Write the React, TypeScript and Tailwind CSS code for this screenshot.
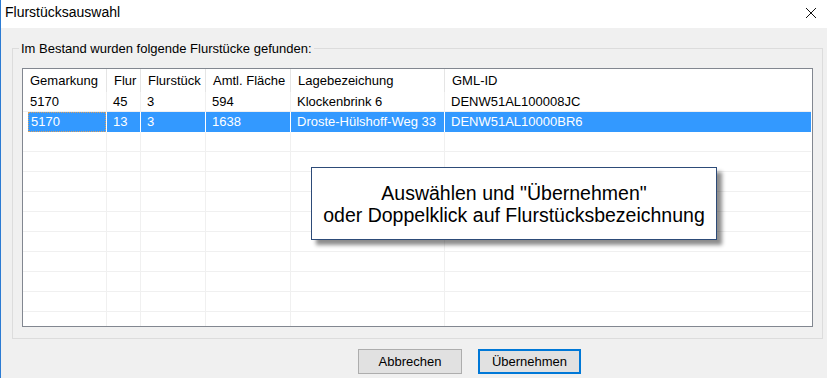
import React from "react";

type Row = string[];

const cols = [84, 34, 65, 85, 154, 366];
const headers = ["Gemarkung", "Flur", "Flurstück", "Amtl. Fläche", "Lagebezeichung", "GML-ID"];

const rows: Row[] = [
  ["5170", "45", "3", "594", "Klockenbrink 6", "DENW51AL100008JC"],
  ["5170", "13", "3", "1638", "Droste-Hülshoff-Weg 33", "DENW51AL10000BR6"],
];

const gridCols = "grid grid-cols-[84px_34px_65px_85px_154px_366px]";

const ui = { fontFamily: '"Liberation Sans", Arial, sans-serif' };

export default function App() {
  const empty = Array.from({ length: 10 });

  return (
    <div
      className="relative w-[827px] h-[378px] flex flex-col bg-white border-l border-[#2b7bd3] text-[13px] text-black overflow-hidden"
      style={ui}
    >
      {/* title bar */}
      <div className="h-[28px] flex items-center justify-between bg-white pl-[4px] pr-[10px]">
        <span className="text-[14px] -mt-[3px]">Flurstücksauswahl</span>
        <svg width="12" height="12" viewBox="0 0 12 12" className="-mt-[2px]">
          <path d="M1 1 L11 11 M11 1 L1 11" stroke="#111" strokeWidth="1" />
        </svg>
      </div>

      {/* client area */}
      <div className="flex-1 bg-[#f0f0f0] flex flex-col">
        <fieldset className="ml-[11px] mr-[4px] mt-[13px] h-[298px] border border-[#dcdcdc] px-[9px]">
          <legend className="-ml-[3px] px-[2px] text-[13px] leading-[15px]">
            Im Bestand wurden folgende Flurstücke gefunden:
          </legend>

          {/* list view */}
          <div className="mt-[12px] h-[259px] w-[791px] border border-[#828790] bg-white overflow-hidden">
            <div className={`${gridCols} h-[23px]`}>
              {headers.map((h, i) => (
                <div
                  key={h}
                  className={`flex items-center pl-[7px] ${i < headers.length - 1 ? "border-r border-[#e5e5e5]" : ""}`}
                >
                  {h}
                </div>
              ))}
            </div>

            {rows.map((r, ri) => {
              const sel = ri === 1;
              return (
                <div key={ri} className={`${gridCols} h-[20px]`}>
                  {r.map((c, i) => (
                    <div
                      key={i}
                      className={`h-[20px] flex ${i < r.length - 1 ? "border-r" : ""} ${
                        sel ? "border-white" : "border-[#f0f0f0] border-b"
                      } ${i === 0 ? "pl-[5px]" : ""}`}
                    >
                      <div
                        className={`flex-1 flex items-center ${i === 0 ? "pl-[2px]" : "pl-[6px]"} ${
                          sel ? "bg-[#3399ff] text-white" : ""
                        } ${sel && i === 0 ? "border border-dotted border-[#d8a060]" : ""}`}
                      >
                        {c}
                      </div>
                    </div>
                  ))}
                </div>
              );
            })}

            {empty.map((_, ri) => (
              <div key={ri} className={`${gridCols} h-[20px]`}>
                {cols.map((_, i) => (
                  <div
                    key={i}
                    className={`border-b border-[#f0f0f0] ${i < cols.length - 1 ? "border-r" : ""}`}
                  />
                ))}
              </div>
            ))}
          </div>
        </fieldset>

        {/* buttons */}
        <div className="flex justify-center gap-[16px] mt-[10px] pl-[111px]">
          <button className="w-[104px] h-[25px] bg-[#e1e1e1] border border-[#adadad] text-[13px]">
            Abbrechen
          </button>
          <button className="w-[103px] h-[25px] bg-[#e1e1e1] border-2 border-[#0078d7] text-[13px]">
            Übernehmen
          </button>
        </div>
      </div>

      {/* hint overlay */}
      <div
        className="absolute left-[310px] top-[167px] w-[406px] h-[73px] bg-white border-[1.5px] border-[#2d4b78] shadow-[5px_5px_4px_rgba(0,0,0,0.45)] flex flex-col items-center justify-center text-[19.5px] leading-[22px]"
        style={ui}
      >
        <span>Auswählen und "Übernehmen"</span>
        <span>oder Doppelklick auf Flurstücksbezeichnung</span>
      </div>
    </div>
  );
}
